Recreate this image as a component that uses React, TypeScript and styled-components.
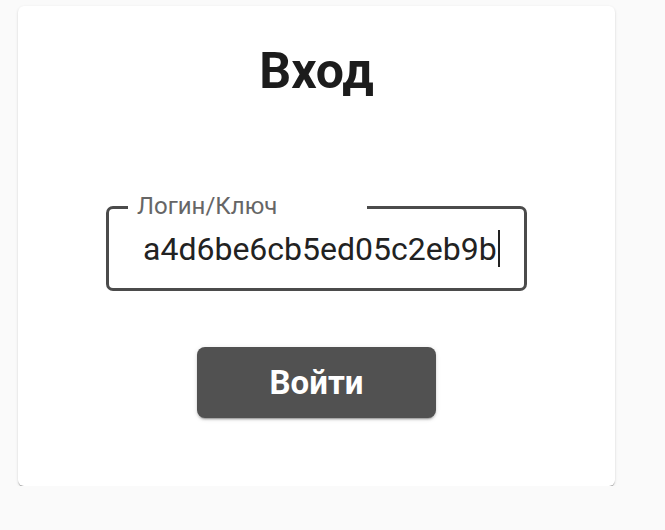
import React from 'react';
import styled, { createGlobalStyle } from 'styled-components';

const GlobalStyle = createGlobalStyle`
  html, body {
    margin: 0;
    padding: 0;
    background: #fafafa;
    font-family: Roboto, 'Noto Sans', 'Liberation Sans', sans-serif;
  }
`;

// страница входа
export default function App() {
  const login = 'a4d6be6cb5ed05c2eb9b';

  return (
    <>
      <GlobalStyle />
      <Page>
        <Card>
          <Title>Вход</Title>
          <Field>
            <Label>Логин/Ключ</Label>
            <Value>
              {login}
              <Caret />
            </Value>
          </Field>
          <SubmitButton type="button">Войти</SubmitButton>
        </Card>
      </Page>
    </>
  );
}

const Page = styled.div`
  padding: 6px 0 0 18px;
`;

const Card = styled.div`
  box-sizing: border-box;
  width: 597px;
  height: 480px;
  display: flex;
  flex-direction: column;
  align-items: center;
  padding-top: 36px;
  background: #fff;
  border-radius: 6px;
  box-shadow: 0 2px 1px -1px rgba(0, 0, 0, 0.25), 0 1px 1px 0 rgba(0, 0, 0, 0.14),
    0 1px 3px 0 rgba(0, 0, 0, 0.12);
`;

const Title = styled.h1`
  margin: 0;
  font-size: 50px;
  font-weight: 700;
  color: #1c1c1c;
  text-align: center;
`;

const Field = styled.div`
  position: relative;
  box-sizing: border-box;
  width: 421px;
  height: 85px;
  margin-top: 106px;
  display: flex;
  align-items: center;
  padding-left: 34px;
  border: 3px solid #4b4b4b;
  border-radius: 7px;
`;

const Label = styled.span`
  position: absolute;
  top: -15px;
  left: 19px;
  box-sizing: border-box;
  width: 239px;
  padding: 0 9px;
  background: #fff;
  font-size: 24px;
  line-height: 24px;
  color: #666;
`;

const Value = styled.div`
  display: flex;
  align-items: center;
  font-size: 32px;
  color: #222;
`;

const Caret = styled.span`
  display: inline-block;
  width: 2px;
  height: 37px;
  margin-left: 1px;
  background: #222;
`;

const SubmitButton = styled.button`
  width: 239px;
  height: 71px;
  margin-top: 56px;
  border: none;
  border-radius: 8px;
  background: #515151;
  color: #fff;
  font-family: Roboto, 'Noto Sans', 'Liberation Sans', sans-serif;
  font-size: 33px;
  font-weight: 700;
  cursor: pointer;
  box-shadow: 0 3px 1px -2px rgba(0, 0, 0, 0.2), 0 2px 2px 0 rgba(0, 0, 0, 0.14),
    0 1px 5px 0 rgba(0, 0, 0, 0.12);
`;
